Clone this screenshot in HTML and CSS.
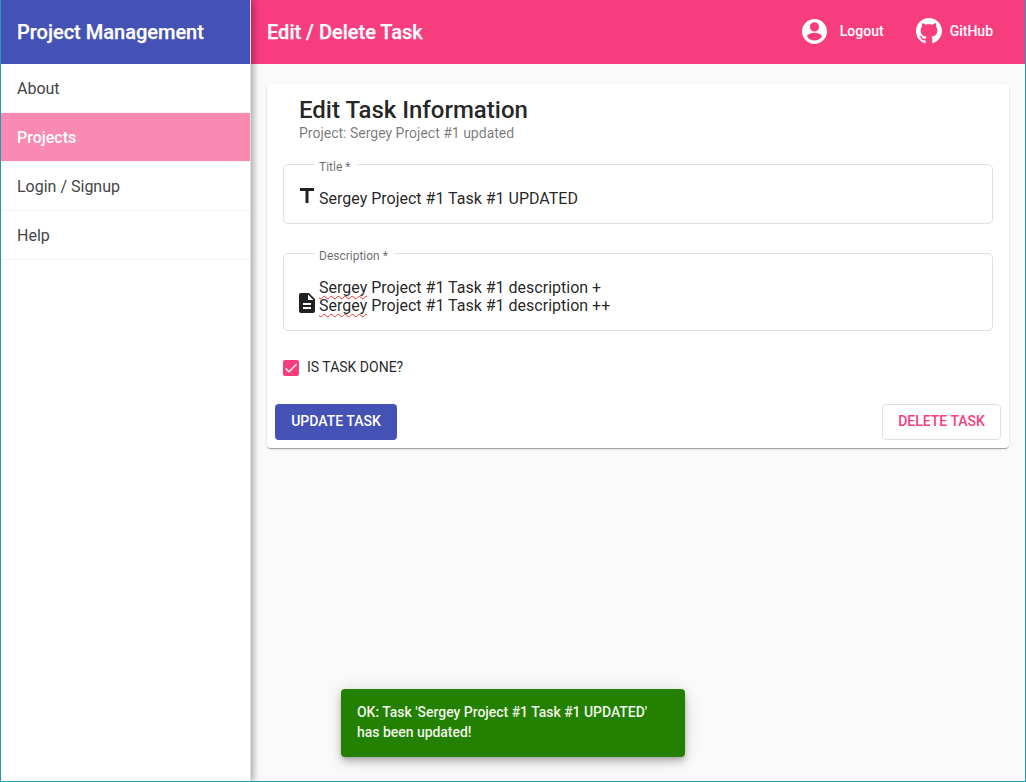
FILE: index.html
```
<!DOCTYPE html>
<html lang="en">
<head>
<meta charset="utf-8">
<title>Project Management</title>
<link rel="stylesheet" href="styles.css">
</head>
<body>
<div class="app">
  <aside class="sidebar">
    <div class="brand">Project Management</div>
    <nav class="menu">
      <a class="menu-item">About</a>
      <a class="menu-item active">Projects</a>
      <a class="menu-item">Login / Signup</a>
      <a class="menu-item">Help</a>
    </nav>
  </aside>
  <main class="main">
    <header class="toolbar">
      <h1 class="page-title">Edit / Delete Task</h1>
      <div class="actions">
        <a class="action logout">
          <svg class="icon-user" viewBox="2 2 20 20"><path fill="#fff" fill-rule="evenodd" d="M12 2a10 10 0 1 0 0 20 10 10 0 0 0 0-20zm0 2.600a3.700 3.700 0 1 1 0 7.400 3.700 3.700 0 0 1 0-7.400zM12 19.200a7.200 7.200 0 0 1-6-3.220c.03-1.990 4-3.080 6-3.080s5.970 1.090 6 3.080a7.200 7.200 0 0 1-6 3.220z"/></svg>
          <span>Logout</span>
        </a>
        <a class="action github">
          <svg class="icon-github" viewBox="0 0 16 16"><path fill="#fff" d="M8 0C3.580 0 0 3.580 0 8c0 3.540 2.290 6.530 5.470 7.590.4.070.55-.17.55-.38 0-.19-.01-.82-.01-1.490-2.010.37-2.530-.49-2.690-.94-.09-.23-.48-.94-.82-1.130-.28-.15-.68-.52-.01-.53.63-.01 1.080.58 1.230.82.72 1.210 1.870.87 2.330.66.07-.52.28-.87.51-1.070-1.780-.2-3.640-.89-3.640-3.950 0-.87.31-1.590.82-2.150-.08-.2-.36-1.020.08-2.120 0 0 .67-.21 2.200.82.64-.18 1.320-.27 2-.27s1.360.09 2 .27c1.530-1.040 2.200-.82 2.200-.82.44 1.100.16 1.920.08 2.120.51.56.82 1.270.82 2.150 0 3.070-1.870 3.750-3.650 3.950.29.25.54.73.54 1.480 0 1.070-.01 1.930-.01 2.200 0 .21.15.46.55.38A8.010 8.010 0 0 0 16 8c0-4.420-3.580-8-8-8z"/></svg>
          <span>GitHub</span>
        </a>
      </div>
    </header>
    <section class="content">
      <form class="card">
        <div class="card-header">
          <h2 class="card-title">Edit Task Information</h2>
          <div class="card-subtitle">Project: Sergey Project #1 updated</div>
        </div>
        <div class="field field-title">
          <label class="field-label field-label-title">Title *</label>
          <svg class="icon-letter" viewBox="0 0 14 15"><path fill="#212121" d="M0 0h14v3H8.500v12h-3V3H0z"/></svg>
          <div class="field-value">Sergey Project #1 Task #1 UPDATED</div>
        </div>
        <div class="field field-description">
          <label class="field-label">Description *</label>
          <svg class="icon-document" viewBox="4 2 16 20"><path fill="#212121" d="M14 2H6a2 2 0 0 0-2 2v16a2 2 0 0 0 2 2h12a2 2 0 0 0 2-2V8l-6-6zm2 16H8v-2h8v2zm0-4H8v-2h8v2zm-3-5V3.500L18.500 9H13z"/></svg>
          <div class="field-value"><span class="misspelled">Sergey</span> Project #1 Task #1 description +<br><span class="misspelled">Sergey</span> Project #1 Task #1 description ++</div>
        </div>
        <div class="check-row">
          <span class="checkbox"><svg viewBox="0 0 24 24"><path d="M4.100 12.700 9 17.600 20.300 6.300" fill="none" stroke="#fafafa" stroke-width="2.130"/></svg></span>
          <span class="check-label">IS TASK DONE?</span>
        </div>
        <div class="buttons">
          <button type="button" class="btn btn-update">UPDATE TASK</button>
          <button type="button" class="btn btn-delete">DELETE TASK</button>
        </div>
      </form>
    </section>
  </main>
</div>
<div class="snackbar">OK: Task 'Sergey Project #1 Task #1 UPDATED' has been updated!</div>
</body>
</html>
```
FILE: styles.css
```
* { box-sizing: border-box; }
body {
  margin: 0;
  font-family: Roboto, "Liberation Sans", sans-serif;
  color: rgba(0, 0, 0, 0.87);
}
svg { display: block; flex: none; }
.app {
  display: flex;
  width: 1026px;
  height: 782px;
  border: solid #1f9db8;
  border-width: 0 1px 1px;
  background: #fafafa;
  overflow: hidden;
}
.sidebar {
  position: relative;
  z-index: 1;
  flex: none;
  width: 250px;
  background: #fff;
  border-right: 1px solid #e0e0e0;
  box-shadow: 3px 0 6px rgba(0, 0, 0, 0.3);
}
.brand {
  display: flex;
  align-items: center;
  height: 64px;
  padding-left: 16px;
  background: #4451b5;
  color: #fff;
  font-size: 20px;
  font-weight: 500;
  -webkit-text-stroke: 0.25px #fff;
}
.menu-item {
  display: flex;
  align-items: center;
  height: 49px;
  padding-left: 16px;
  border-bottom: 1px solid #f2f2f2;
  font-size: 16px;
  color: #444;
}
.menu-item.active {
  background: #fa8ab1;
  background-clip: padding-box;
  color: #fff;
  font-weight: 500;
}
.main { flex: 1; min-width: 0; }
.toolbar {
  display: flex;
  align-items: center;
  justify-content: space-between;
  height: 64px;
  padding: 0 32px 0 16px;
  background: #f83d7f;
  color: #fff;
}
.page-title {
  margin: 0;
  font-size: 20px;
  font-weight: 500;
  -webkit-text-stroke: 0.25px #fff;
}
.actions { display: flex; gap: 32px; font-size: 14px; font-weight: 500; }
.action { display: flex; align-items: center; }
.action span { margin-bottom: 2px; }
.logout { gap: 13px; }
.github { gap: 8px; }
.icon-user { width: 25px; height: 25px; margin-bottom: 1px; }
.icon-github { width: 26px; height: 26px; margin-bottom: 2px; }
.content { padding: 20px 16px; }
.card {
  height: 364px;
  padding: 12px 8px 8px;
  background: #fff;
  border-radius: 4px;
  box-shadow: 0 2px 1px -1px rgba(0,0,0,.2), 0 1px 1px rgba(0,0,0,.14), 0 1px 3px rgba(0,0,0,.12);
}
.card-header { height: 68px; padding-left: 24px; }
.card-title { margin: 0; font-size: 24px; line-height: 28px; font-weight: 500; }
.card-subtitle { font-size: 14px; line-height: 18px; color: rgba(0,0,0,.54); }
.field {
  position: relative;
  display: flex;
  margin: 0 8px;
  border: 1px solid #e0e0e0;
  border-radius: 5px;
  padding-left: 15px;
  font-size: 16px;
}
.field-title { height: 60px; padding-top: 23px; }
.field-title .field-value { padding-top: 2px; }
.field-description { height: 78px; margin-top: 29px; padding-top: 25px; }
.field-label {
  position: absolute;
  top: -6px;
  left: 31px;
  padding: 0 6px 0 4px;
  background: #fff;
  font-size: 12px;
  line-height: 16px;
  color: rgba(0,0,0,.6);
}
.field-label-title { padding-right: 7px; }
.icon-letter { width: 14px; height: 15px; margin: 0 5px 0 1px; }
.icon-document { width: 16px; height: 20px; margin: 14px 4px 0 0; }
.field-value { line-height: 18px; white-space: nowrap; }
.misspelled {
  text-decoration: underline wavy #e53935 0.7px;
  text-underline-offset: 2px;
  text-decoration-skip-ink: none;
}
.check-row { display: flex; align-items: center; gap: 8px; margin: 28px 8px 0; }
.checkbox { width: 16px; height: 16px; background: #f83d7f; border-radius: 2px; }
.check-label { font-size: 14px; line-height: 16px; margin-bottom: 2px; }
.buttons { display: flex; justify-content: space-between; margin-top: 27px; }
.btn {
  height: 36px;
  padding: 0 0 2px;
  border: 0;
  border-radius: 4px;
  font: 500 14px Roboto, "Liberation Sans", sans-serif;
}
.btn-update { width: 122px; background: #4451b5; color: #fff; }
.btn-delete { width: 119px; background: #fff; border: 1px solid #e0e0e0; color: #f83d7f; }
.snackbar {
  position: absolute;
  left: 341px;
  top: 689px;
  width: 344px;
  height: 68px;
  padding: 13px 24px 0 16px;
  border-radius: 4px;
  background: #248000;
  color: rgba(255,255,255,.95);
  font-size: 14px;
  line-height: 20px;
  font-weight: 500;
  letter-spacing: -0.03px;
  box-shadow: 0 3px 5px -1px rgba(0,0,0,.2), 0 6px 10px rgba(0,0,0,.14), 0 1px 18px rgba(0,0,0,.12);
}
```
